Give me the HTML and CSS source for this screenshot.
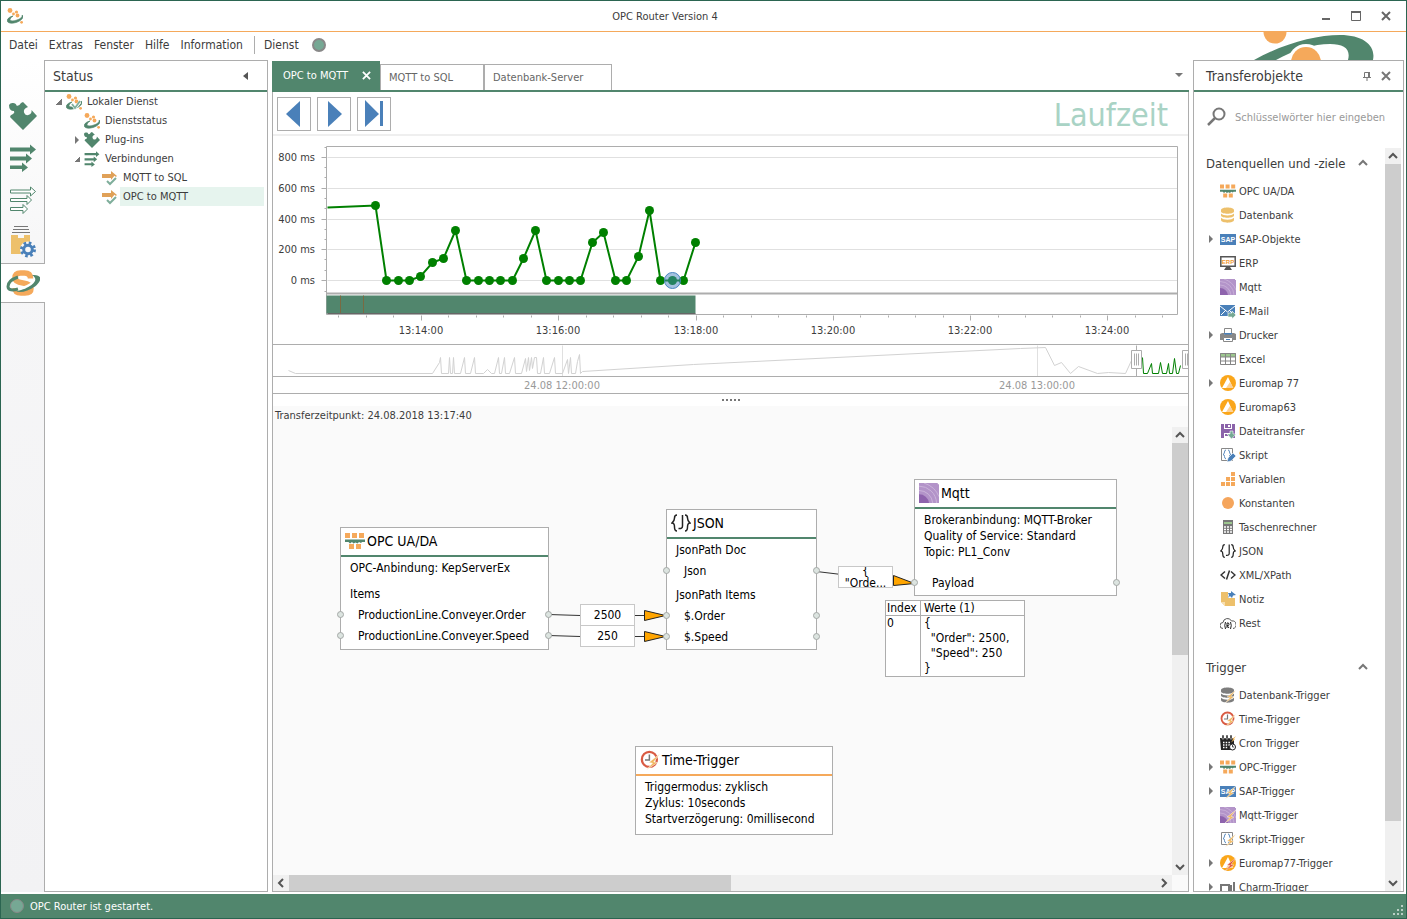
FILE: index.html
```
<!DOCTYPE html>
<html lang="de">

<head>
    <meta charset="utf-8">
    <meta name="viewport" content="width=device-width, initial-scale=1">
    <title>OPC Router Version 4</title>
    <link rel="stylesheet" href="styles.css">
</head>

<body>
    <!-- icon set -->
    <svg class="sprite" aria-hidden="true">
        <symbol id="i-logo" viewBox="0 0 16 16">
            <circle cx="3" cy="2.500" r="2.400" fill="#f5a95b" />
            <circle cx="9.500" cy="4" r="1.600" fill="#f5a95b" />
            <circle cx="6.500" cy="6" r="1.400" fill="#f5a95b" />
            <circle cx="10.500" cy="7.500" r="1.900" fill="#f5a95b" />
            <circle cx="14.600" cy="14.300" r="1.400" fill="#f5a95b" />
            <path d="M15 7c3 2-1 6-6 7.500S-1 15 .5 11.500Q1.500 9 6 8 3 9.500 3 11.500c0 2 4 1.500 7 .5s6-3 5-5z" fill="#51866d" stroke="#51866d" stroke-width=".7" />
        </symbol>
        <symbol id="i-logo-check" viewBox="0 0 16 16">
            <use href="#i-logo" />
            <path d="M6 10l3 4 5-6" fill="none" stroke="#fff" stroke-width="3" />
            <path d="M6 10l3 4 5-7" fill="none" stroke="#7fb09d" stroke-width="1.800" />
        </symbol>
        <symbol id="i-puzzle" viewBox="0 0 28 28">
            <path d="M0 3a4 4 0 0 1 4-2q3 0 3.500 2.500Q10 4.500 12 1l2-1 5 5q-5 1.500-4 5.500 1.500 4 5.500 2 2.500-1.500 2-4.500l5.500 6-14 14L1 15q0-2 3-3 2-1 1-3-5 0-5-6z" fill="#51866d" />
        </symbol>
        <symbol id="i-arrows" viewBox="0 0 26 28">
            <path d="M0 3.500h20V.5l6 5-6 5v-3H0zM0 12.500h16v-3l6 5-6 5v-3H0zM0 21.500h12v-3l6 5-6 4.500v-3H0z" fill="#51866d" />
        </symbol>
        <symbol id="i-arrows-out" viewBox="0 0 26 28">
            <path d="M.5 4h20V1l5 4.500-5 4.500V7H.5zM.5 12.500h16.500v-3l4.500 4.500-4.500 4.500v-3H.5zM.5 21.500h12.500v-3l4.500 4.500-4.500 4.500v-3H.5z" fill="#fff" stroke="#51866d" />
        </symbol>
        <symbol id="i-box" viewBox="0 0 28 32">
            <path d="M5 .5h14M4 3.500h16M3 6.500h18" stroke="#777" fill="none" />
            <path d="M2 9h7v3h6V9h6v19H2z" fill="#edc06b" />
            <circle cx="19" cy="23.500" r="8" fill="#f7f7f8" />
            <circle cx="19" cy="23.500" r="4.300" fill="none" stroke="#4a80b9" stroke-width="3" />
            <circle cx="19" cy="23.500" r="6.500" fill="none" stroke="#4a80b9" stroke-width="3" stroke-dasharray="2.550 2.550" />
        </symbol>
        <symbol id="i-service" viewBox="0 0 34 26">
            <path d="M24.500 8.500q0-5.500-6-5.500h-4q-5.500 0-5.500 5 0 4 8 5t8 5.500q0 4.500-6 4.500h-4q-6 0-6-5" fill="none" stroke="#f5a95b" stroke-width="5.500" />
            <path d="M10 19.500c7 0 17-5 20-10" fill="none" stroke="#fff" stroke-width="3" />
            <path d="M12 7Q2 10.500 2 16.500c0 4 5 4 10 2.500" fill="none" stroke="#51866d" stroke-width="3" />
            <path d="M26 5c11-1 10 6 3 11.500-6 4.500-14 6.500-19 5 8-2 11-3.500 15.500-6.500 5-4 5-7 .5-10z" fill="#51866d" />
        </symbol>
        <symbol id="i-link" viewBox="0 0 16 16">
            <path d="M0 4h9V1l6 5-6 5V8H0z" fill="#e0a158" />
            <path d="M6 10l3 3 5-6" fill="none" stroke="#fff" stroke-width="4" />
            <path d="M5 11l3 3 6-6" fill="none" stroke="#7fae9b" stroke-width="2" />
        </symbol>
        <symbol id="i-opc" viewBox="0 0 20 20">
            <path d="M0 2h5v5H0zM7 2h5v5H7zM14 2h5v5h-5zM4 13h5v5H4zM11 13h5v5h-5z" fill="#f5a95b" />
            <path d="M0 8.500h20V11h-3l-1 1-2-1-1.500 1.500-2-1-2 1L7 11l-2 1.500L3.500 11H0z" fill="#51866d" />
        </symbol>
        <symbol id="i-db" viewBox="0 0 16 16">
            <path d="M1 3c0-3.500 13-3.500 13 0v1.500c0 3-13 3-13 0zM1 6.500c2 2.500 11 2.500 13 0v2c0 3-13 3-13 0zM1 10.800c2 2.500 11 2.500 13 0v2.200c0 3.500-13 3.500-13 0z" />
        </symbol>
        <symbol id="i-sap" viewBox="0 0 16 16">
            <path d="M0 3h16v11H0z" fill="#4a80b9" />
            <text x="8" y="11" class="glyph-sap">SAP</text>
        </symbol>
        <symbol id="i-erp" viewBox="0 0 16 16">
            <path d="M.8 1.800h14.400v9.400H.8z" fill="#fff" stroke="#555" stroke-width="1.500" />
            <path d="M6 12h4l2 3H4z" fill="#555" />
            <text x="8" y="9" class="glyph-erp">ERP</text>
        </symbol>
        <symbol id="i-mqtt" viewBox="0 0 16 16">
            <path d="M0 0h16v16H0z" fill="#b394c9" />
            <path d="M0 9a8 8 0 0 1 8 7H0z" fill="#8e63ad" />
            <path d="M0 6a11 11 0 0 1 11 10M0 2.500A14 14 0 0 1 14 16M4 0q9 3 12 11" fill="none" stroke="#cbb4da" stroke-width=".8" />
            <path d="M15 0h1v1h-1z" fill="#fff" />
        </symbol>
        <symbol id="i-mail" viewBox="0 0 16 16">
            <path d="M0 2h15v11H0z" fill="#4a80b9" />
            <path d="M0 3l7.500 6L15 3M1 12l5-5M14 12L9 7" fill="none" stroke="#fff" />
            <path d="M8 10h4V8l4 4-4 4v-2H8z" fill="#76a894" stroke="#fff" stroke-width=".6" />
        </symbol>
        <symbol id="i-print" viewBox="0 0 16 16">
            <path d="M4.500 1.500h7v6h-7z" fill="#fff" stroke="#888" />
            <path d="M0 7l2-1h2v2h8V6h2l2 1v6H0z" fill="#888" />
            <path d="M4 6h8v1.500H4z" fill="#4a80b9" />
            <path d="M3.500 10.500h9v4h-9z" fill="#fff" stroke="#888" />
            <path d="M6 12.500h4" stroke="#4a80b9" />
        </symbol>
        <symbol id="i-excel" viewBox="0 0 16 16">
            <path d="M.5 2.500h15v11H.5z" fill="#fff" />
            <path d="M0 2h16v4H0z" fill="#9cc68e" />
            <path d="M.5 2.500h15v11H.5zM0 6h16M0 10h16M5.500 2v12M10.500 2v12" fill="none" stroke="#858585" />
        </symbol>
        <symbol id="i-euro" viewBox="0 0 16 16">
            <circle cx="8" cy="8" r="8" fill="#faa61a" />
            <path d="M8 2l5 11H2z" fill="#fff" />
            <path d="M10 7l3.500 6H6z" fill="#fcd39a" />
        </symbol>
        <symbol id="i-disk" viewBox="0 0 16 16">
            <path d="M1 1h14v14H1z" fill="#8b63aa" />
            <path d="M4 1h8v5H4zM4 10h8v5H4z" fill="#fff" />
            <path d="M5 1h6v4H5zM5 11h3v2H5z" fill="#8b63aa" />
            <path d="M8 2h2v2H8z" fill="#fff" />
            <path d="M10 8h3v3h3l-4.500 5L7 11h3z" fill="#76a894" stroke="#fff" stroke-width=".6" />
        </symbol>
        <symbol id="i-script" viewBox="0 0 16 16">
            <path d="M1.500 1.500h11v12h-11z" fill="#fff" stroke="#888" />
            <path d="M6 3Q4.500 3 4.500 5T3 7.500q1.500 0 1.500 2T6 12M8 3q1.500 0 1.500 2T11 7.500q-1.500 0-1.500 2T8 12" fill="none" stroke="#4a80b9" stroke-width=".9" />
        </symbol>
        <symbol id="i-pen" viewBox="0 0 16 16">
            <path d="M7 15l1-4 5-5 3 3-5 5z" fill="#4a80b9" stroke="#fff" stroke-width=".6" />
        </symbol>
        <symbol id="i-vars" viewBox="0 0 16 16">
            <path d="M1 11h4v4H1zM6 11h4v4H6zM11 11h4v4h-4zM6 6h4v4H6zM11 6h4v4h-4zM11 1h4v4h-4z" fill="#f5a95b" />
        </symbol>
        <symbol id="i-const" viewBox="0 0 16 16">
            <circle cx="8" cy="8" r="6" fill="#f5a55c" />
        </symbol>
        <symbol id="i-calc" viewBox="0 0 16 16">
            <path d="M3 1h10v14H3z" fill="#777" />
            <path d="M4 3h8v2H4z" fill="#9cc68e" />
            <path d="M4 8h8M4 10.500h8M4 13h8" stroke="#fff" stroke-width="1.500" stroke-dasharray="2 1" />
        </symbol>
        <symbol id="i-json" viewBox="0 0 20 20">
            <path d="M6 2Q3.500 2 3.500 5T1 10q2.500 0 2.500 4T6 18M14 2q2.500 0 2.500 3T19 10q-2.500 0-2.500 4T14 18M11.500 2v11q0 3-4 2.500" fill="none" stroke="#222" stroke-width="1.500" />
        </symbol>
        <symbol id="i-xml" viewBox="0 0 16 16">
            <path d="M5 4.500L1 8l4 3.500M11 4.500L15 8l-4 3.500M9.500 3.500l-3 9" fill="none" stroke="#333" stroke-width="1.500" />
        </symbol>
        <symbol id="i-note" viewBox="0 0 16 16">
            <path d="M1 1h14v14H5l-4-4z" fill="#edc06b" />
            <path d="M1 11h4v4z" fill="#f7dfb0" />
            <path d="M8 0h8v7H8z" fill="#fff" />
            <path d="M11 0l5 4-3 .5-1 2.500-2-2-2 2 1-3-1-2h3z" fill="#4a80b9" />
        </symbol>
        <symbol id="i-rest" viewBox="0 0 16 16">
            <path d="M3 13.500a3 3 0 0 1 0-6 4.500 4.500 0 0 1 8.500-1.500 3.500 3.500 0 0 1 1.500 7.500" fill="none" stroke="#555" />
            <path d="M5.500 7q-1.500 3.500 0 7M10.500 7q1.500 3.500 0 7M7 13V8h1.500q1 1.500 0 2.500H7l2 2.500" fill="none" stroke="#222" />
        </symbol>
        <symbol id="i-clock" viewBox="0 0 16 16">
            <circle cx="7.500" cy="7.500" r="6" fill="#fff" stroke="#d95b43" stroke-width="1.800" />
            <path d="M7.500 3.500V8H4" fill="none" stroke="#777" stroke-width="1.200" />
        </symbol>
        <symbol id="i-cron" viewBox="0 0 16 16">
            <path d="M0 3h14v12H1z" fill="#222" />
            <path d="M2 0h2v4H2zM6 0h2v4H6zM10 0h2v4h-2z" fill="#222" stroke="#fff" stroke-width=".5" />
            <path d="M3 7.500h8M3 10h8M3 12.500h5" stroke="#fff" stroke-width="1.300" stroke-dasharray="1.500 1.200" />
            <path d="M16 1l-4 3 1 .5-2 3 4-3-1-.5z" fill="#f0b860" />
            <circle cx="12.500" cy="12" r="3" fill="#fff" stroke="#222" />
            <path d="M12.500 10v2h1.500" fill="none" stroke="#222" stroke-width=".8" />
        </symbol>
        <symbol id="i-charm" viewBox="0 0 16 16">
            <path d="M1 14V6h8v8M11 14V6M14 14V3" fill="none" stroke="#777" stroke-width="2" />
        </symbol>
        <symbol id="i-bolt" viewBox="0 0 16 16">
            <path d="M16 3l-9 7 3 .5L5 16l9-6-3-.5z" stroke="#fff" stroke-width=".4" />
        </symbol>
        <symbol id="i-search" viewBox="0 0 20 20">
            <circle cx="12" cy="7" r="5.500" fill="none" stroke="#777" stroke-width="2" />
            <path d="M8 11l-7 7" stroke="#777" stroke-width="2.500" />
        </symbol>
        <symbol id="i-close" viewBox="0 0 10 10">
            <path d="M1 1l8 8M9 1L1 9" fill="none" stroke="currentColor" stroke-width="2" />
        </symbol>
        <symbol id="i-up" viewBox="0 0 10 10">
            <path d="M1 7l4-4 4 4" fill="none" stroke="currentColor" stroke-width="2" />
        </symbol>
    </svg>

    <div class="titlebar">
        <svg class="app-logo"><use href="#i-logo" /></svg>
        <h1>OPC Router Version 4</h1>
        <div class="window-buttons">
            <button aria-label="Minimieren"><svg viewBox="0 0 10 10"><path d="M1 8h8" stroke="currentColor" stroke-width="2" /></svg></button>
            <button aria-label="Maximieren"><svg viewBox="0 0 10 10"><path d="M.5.500h9v9h-9z" fill="none" stroke="currentColor" /><path d="M0 1h10" stroke="currentColor" stroke-width="2" /></svg></button>
            <button aria-label="Schließen"><svg><use href="#i-close" /></svg></button>
        </div>
    </div>

    <div class="menubar">
        <button>Datei</button>
        <button>Extras</button>
        <button>Fenster</button>
        <button>Hilfe</button>
        <button>Information</button>
        <button class="service-menu">Dienst</button>
        <span class="service-light"></span>
        <svg class="brand" viewBox="0 0 120 28">
            <path d="M0 28C28 12 62 3 86 3c24 0 36 11 33 25H94c3-11-4-16-18-16-16 0-36 6-54 16z" fill="#51866d" />
            <circle cx="21" cy="0" r="11.500" fill="#f5a95b" />
            <circle cx="52" cy="30" r="18" fill="#fff" />
            <circle cx="52" cy="30" r="15" fill="#f5a95b" />
        </svg>
    </div>

    <div class="main">
        <div class="sidenav">
            <button aria-label="Plug-ins"><svg width="28" height="28"><use href="#i-puzzle" /></svg></button>
            <button aria-label="Verbindungen"><svg width="26" height="28"><use href="#i-arrows" /></svg></button>
            <button aria-label="Vorlagen"><svg width="26" height="28"><use href="#i-arrows-out" /></svg></button>
            <button aria-label="Projekte"><svg width="28" height="32"><use href="#i-box" /></svg></button>
            <button aria-label="Status" class="selected"><svg width="34" height="26"><use href="#i-service" /></svg></button>
        </div>

        <div class="panel status">
            <div class="panel-head">
                <h2>Status</h2>
                <button aria-label="Einklappen"><svg viewBox="0 0 10 10"><path d="M7 1v8L2 5z" fill="#555" /></svg></button>
            </div>
            <ul class="tree">
                <li class="level1"><span class="twist open"></span><svg class="icon"><use href="#i-logo-check" /></svg><span>Lokaler Dienst</span></li>
                <li class="level2"><span class="twist"></span><svg class="icon"><use href="#i-logo" /></svg><span>Dienststatus</span></li>
                <li class="level2"><span class="twist closed"></span><svg class="icon"><use href="#i-puzzle" /></svg><span>Plug-ins</span></li>
                <li class="level2"><span class="twist open"></span><svg class="icon"><use href="#i-arrows" /></svg><span>Verbindungen</span></li>
                <li class="level3"><span class="twist"></span><svg class="icon"><use href="#i-link" /></svg><span>MQTT to SQL</span></li>
                <li class="level3 active"><span class="twist"></span><svg class="icon"><use href="#i-link" /></svg><span>OPC to MQTT</span></li>
            </ul>
        </div>

        <div class="center">
            <div class="tabs">
                <button class="tab current">OPC to MQTT <svg><use href="#i-close" /></svg></button>
                <button class="tab">MQTT to SQL</button>
                <button class="tab wide">Datenbank-Server</button>
                <button class="tab-list" aria-label="Alle Tabs"><svg viewBox="0 0 8 8"><path d="M0 2h8L4 6z" fill="#777" /></svg></button>
            </div>
            <div class="center-body">
                <div class="toolbar">
                    <button aria-label="Zurück"><svg viewBox="0 0 32 32"><path d="M22 3v26L8 16z" fill="#4a80b9" /></svg></button>
                    <button aria-label="Vor"><svg viewBox="0 0 32 32"><path d="M10 3v26l14-13z" fill="#4a80b9" /></svg></button>
                    <button aria-label="Ende"><svg viewBox="0 0 32 32"><path d="M7 2v27l14-13zM22 3h3v25h-3z" fill="#4a80b9" /></svg></button>
                    <span class="caption">Laufzeit</span>
                </div>

                <!-- runtime chart -->
                <svg class="chart">
                    <defs>
                        <marker id="dot" markerWidth="10" markerHeight="10" refX="5" refY="5" markerUnits="userSpaceOnUse">
                            <circle cx="5" cy="5" r="4.500" fill="#008000" />
                        </marker>
                    </defs>
                    <g transform="translate(.5 .5)">
                        <path d="M54 21h850M54 52h850M54 83h850M54 113h850M54 144h850" stroke="#e0e0e0" />
                        <path d="M53 178V10h851v168zM48 21h5M48 52h5M48 83h5M48 113h5M48 144h5M51 11h2M51 31h2M51 41h2M51 62h2M51 72h2M51 93h2M51 103h2M51 123h2M51 134h2M51 155h2" class="axis" />
                        <path d="M148 179v5M285 179v5M423 179v5M560 179v5M697 179v5M834 179v5M65 179v2M93 179v2M120 179v2M175 179v2M203 179v2M230 179v2M258 179v2M313 179v2M340 179v2M368 179v2M395 179v2M450 179v2M478 179v2M505 179v2M533 179v2M587 179v2M615 179v2M642 179v2M670 179v2M725 179v2M752 179v2M779 179v2M807 179v2M862 179v2M889 179v2" class="axis" />
                        <path d="M53 157h851" stroke="#adadad" stroke-width="2" />
                        <path d="M53 159h369v18H53z" fill="#51866d" />
                        <path d="M67 159v18M90 159v18" stroke="#7a6a42" />
                        <path d="M54 177h368" stroke="#666" />
                        <polyline class="series" points="54,71 102,69 113,144 125,144 136,144 147,140 159,126 170,122 182,94 193,144 205,144 216,144 227,144 239,144 250,122 262,94 273,144 285,144 296,144 307,144 319,106 330,96 342,144 353,144 365,120 376,74 387,144 399,144 410,144 422,106" />
                        <circle cx="399" cy="144" r="8" fill="#4a86c0" fill-opacity=".5" stroke="#4a86c0" />
                    </g>
                    <g class="labels-y">
                        <text x="42" y="25">800 ms</text>
                        <text x="42" y="56">600 ms</text>
                        <text x="42" y="87">400 ms</text>
                        <text x="42" y="117">200 ms</text>
                        <text x="42" y="148">0 ms</text>
                    </g>
                    <g class="labels-x">
                        <text x="148" y="198">13:14:00</text>
                        <text x="285" y="198">13:16:00</text>
                        <text x="423" y="198">13:18:00</text>
                        <text x="560" y="198">13:20:00</text>
                        <text x="697" y="198">13:22:00</text>
                        <text x="834" y="198">13:24:00</text>
                    </g>
                </svg>

                <!-- range selector -->
                <svg class="range">
                    <g transform="translate(.5 .5)" fill="none">
                        <path d="M289 0v31M764 0v31" stroke="#e0e0e0" />
                        <polyline stroke="#d2d2d2" points="15,25 22,28 159,28 166,17 167,12 168,28 175,28 176,12 177,28 179,28 180,12 181,28 187,28 191,12 192,28 197,28 201,12 202,28 210,28 214,24 218,28 221,28 225,12 226,28 228,28 231,12 232,28 236,28 241,12 242,28 248,28 252,13 253,26 255,12 256,25 258,12 259,23 261,12 263,12 264,28 267,28 270,12 271,28 276,28 281,12 282,28 289,28 294,14 295,28 297,12 298,28 302,28 304,16 306,9 307,28 309,26 420,19 747,3 772,2 781,20 788,17 797,28 805,21 824,28 835,27 852,28 858,15" />
                        <path d="M863 0v31" stroke="#adadad" />
                        <polyline stroke="#008000" points="869,12 870,28 874,28 878,18 879,28 885,28 887,17 889,28 893,28 895,18 896,28 899,28 901,13 903,28 905,28 907,20" />
                        <path d="M858 5h10v18h-10zM909 5h10v18h-10z" fill="#fff" stroke="#adadad" />
                        <path d="M861 8v12M863 8v12M865 8v12M912 8v12M914 8v12" stroke="#adadad" />
                    </g>
                </svg>
                <svg class="range-labels">
                    <text x="289" y="12">24.08 12:00:00</text>
                    <text x="764" y="12">24.08 13:00:00</text>
                </svg>
                <div class="splitter"><i></i><i></i><i></i><i></i><i></i></div>

                <div class="flow">
                    <p class="transfer-time">Transferzeitpunkt: 24.08.2018 13:17:40</p>
                    <div class="flow-view">
                        <div class="canvas">
                            <div class="node node-opc">
                                <h3><svg class="icon20"><use href="#i-opc" /></svg>OPC UA/DA</h3>
                                <p>OPC-Anbindung: KepServerEx</p>
                                <p class="section">Items</p>
                                <ul>
                                    <li>ProductionLine.Conveyer.Order</li>
                                    <li>ProductionLine.Conveyer.Speed</li>
                                </ul>
                            </div>
                            <div class="node node-json">
                                <h3><svg class="icon20"><use href="#i-json" /></svg>JSON</h3>
                                <p>JsonPath Doc</p>
                                <ul>
                                    <li>Json</li>
                                </ul>
                                <p class="subsection">JsonPath Items</p>
                                <ul>
                                    <li>$.Order</li>
                                    <li>$.Speed</li>
                                </ul>
                            </div>
                            <div class="node node-mqtt">
                                <h3><svg class="icon20"><use href="#i-mqtt" /></svg>Mqtt</h3>
                                <p>Brokeranbindung: MQTT-Broker</p>
                                <p>Quality of Service: Standard</p>
                                <p>Topic: PL1_Conv</p>
                                <ul class="payload">
                                    <li>Payload</li>
                                </ul>
                            </div>
                            <div class="node node-time">
                                <h3><svg class="icon20"><use href="#i-clock" /><use href="#i-bolt" class="bolt" /></svg>Time-Trigger</h3>
                                <p>Triggermodus: zyklisch</p>
                                <p>Zyklus: 10seconds</p>
                                <p>Startverzögerung: 0millisecond</p>
                            </div>
                            <svg class="wires">
                                <g transform="translate(.5 .5)">
                                    <path d="M275 187l32 1h87M275 208l32 1h87M543 144l25 3" stroke="#333" fill="none" />
                                    <path d="M371 183v10l21-5zM371 204v10l21-5zM620 148v10l21-2z" fill="#ffa500" stroke="#222" />
                                    <g fill="#dce4e0" stroke="#a5a9a7">
                                        <circle cx="67" cy="187" r="3" /><circle cx="67" cy="208" r="3" />
                                        <circle cx="275" cy="187" r="3" /><circle cx="275" cy="208" r="3" />
                                        <circle cx="393" cy="143" r="3" /><circle cx="393" cy="188" r="3" /><circle cx="393" cy="209" r="3" />
                                        <circle cx="543" cy="143" r="3" /><circle cx="543" cy="188" r="3" /><circle cx="543" cy="209" r="3" />
                                        <circle cx="641" cy="155" r="3" /><circle cx="843" cy="155" r="3" />
                                    </g>
                                </g>
                            </svg>
                            <span class="value value-order">2500</span>
                            <span class="value value-speed">250</span>
                            <span class="value value-json">{
"Orde...</span>
                            <table class="values">
                                <tr>
                                    <th>Index</th>
                                    <th>Werte (1)</th>
                                </tr>
                                <tr>
                                    <td>0</td>
                                    <td>{
  "Order": 2500,
  "Speed": 250
}</td>
                                </tr>
                            </table>
                        </div>
                        <div class="scroll-v">
                            <button aria-label="Nach oben"><svg><use href="#i-up" /></svg></button>
                            <div class="thumb"></div>
                            <button aria-label="Nach unten" class="down"><svg><use href="#i-up" /></svg></button>
                        </div>
                    </div>
                    <div class="scroll-h">
                        <button aria-label="Nach links" class="left"><svg><use href="#i-up" /></svg></button>
                        <div class="thumb"></div>
                        <button aria-label="Nach rechts" class="right"><svg><use href="#i-up" /></svg></button>
                    </div>
                </div>
            </div>
        </div>

        <div class="panel objects">
            <div class="panel-head">
                <h2>Transferobjekte</h2>
                <button aria-label="Anheften"><svg viewBox="0 0 10 10"><path d="M2.500 6V1.500h5V6M1 6.500h8M5 6v4" fill="none" stroke="#777" /><path d="M6 1h2v5H6z" fill="#777" /></svg></button>
                <button aria-label="Schließen"><svg><use href="#i-close" /></svg></button>
            </div>
            <label class="search">
                <svg><use href="#i-search" /></svg>
                <input type="text" placeholder="Schlüsselwörter hier eingeben" aria-label="Schlüsselwörter">
            </label>
            <div class="object-area">
                <div class="object-list">
                    <h3>Datenquellen und -ziele <svg><use href="#i-up" /></svg></h3>
                    <ul>
                        <li><span class="twist"></span><svg class="icon"><use href="#i-opc" /></svg>OPC UA/DA</li>
                        <li><span class="twist"></span><svg class="icon yellow"><use href="#i-db" /></svg>Datenbank</li>
                        <li><span class="twist closed"></span><svg class="icon"><use href="#i-sap" /></svg>SAP-Objekte</li>
                        <li><span class="twist"></span><svg class="icon"><use href="#i-erp" /></svg>ERP</li>
                        <li><span class="twist"></span><svg class="icon"><use href="#i-mqtt" /></svg>Mqtt</li>
                        <li><span class="twist"></span><svg class="icon"><use href="#i-mail" /></svg>E-Mail</li>
                        <li><span class="twist closed"></span><svg class="icon"><use href="#i-print" /></svg>Drucker</li>
                        <li><span class="twist"></span><svg class="icon"><use href="#i-excel" /></svg>Excel</li>
                        <li><span class="twist closed"></span><svg class="icon"><use href="#i-euro" /></svg>Euromap 77</li>
                        <li><span class="twist"></span><svg class="icon"><use href="#i-euro" /></svg>Euromap63</li>
                        <li><span class="twist"></span><svg class="icon"><use href="#i-disk" /></svg>Dateitransfer</li>
                        <li><span class="twist"></span><svg class="icon"><use href="#i-script" /><use href="#i-pen" /></svg>Skript</li>
                        <li><span class="twist"></span><svg class="icon"><use href="#i-vars" /></svg>Variablen</li>
                        <li><span class="twist"></span><svg class="icon"><use href="#i-const" /></svg>Konstanten</li>
                        <li><span class="twist"></span><svg class="icon"><use href="#i-calc" /></svg>Taschenrechner</li>
                        <li><span class="twist"></span><svg class="icon"><use href="#i-json" /></svg>JSON</li>
                        <li><span class="twist"></span><svg class="icon"><use href="#i-xml" /></svg>XML/XPath</li>
                        <li><span class="twist"></span><svg class="icon"><use href="#i-note" /></svg>Notiz</li>
                        <li><span class="twist"></span><svg class="icon"><use href="#i-rest" /></svg>Rest</li>
                    </ul>
                    <h3>Trigger <svg><use href="#i-up" /></svg></h3>
                    <ul>
                        <li><span class="twist"></span><svg class="icon"><use href="#i-db" class="grey" /><use href="#i-bolt" class="bolt" /></svg>Datenbank-Trigger</li>
                        <li><span class="twist"></span><svg class="icon"><use href="#i-clock" /><use href="#i-bolt" class="bolt" /></svg>Time-Trigger</li>
                        <li><span class="twist"></span><svg class="icon"><use href="#i-cron" /></svg>Cron Trigger</li>
                        <li><span class="twist closed"></span><svg class="icon"><use href="#i-opc" /></svg>OPC-Trigger</li>
                        <li><span class="twist closed"></span><svg class="icon"><use href="#i-sap" /><use href="#i-bolt" class="bolt" /></svg>SAP-Trigger</li>
                        <li><span class="twist"></span><svg class="icon"><use href="#i-mqtt" /><use href="#i-bolt" class="bolt" /></svg>Mqtt-Trigger</li>
                        <li><span class="twist"></span><svg class="icon"><use href="#i-script" /><use href="#i-bolt" class="bolt" /></svg>Skript-Trigger</li>
                        <li><span class="twist closed"></span><svg class="icon"><use href="#i-euro" /><use href="#i-bolt" class="bolt red" /></svg>Euromap77-Trigger</li>
                        <li><span class="twist closed"></span><svg class="icon"><use href="#i-charm" /></svg>Charm-Trigger</li>
                    </ul>
                </div>
                <div class="scroll-v">
                    <button aria-label="Nach oben"><svg><use href="#i-up" /></svg></button>
                    <div class="thumb"></div>
                    <button aria-label="Nach unten" class="down"><svg><use href="#i-up" /></svg></button>
                </div>
            </div>
        </div>
    </div>

    <div class="statusbar">
        <span class="service-light"></span>
        OPC Router ist gestartet.
        <svg class="grip" viewBox="0 0 10 10"><path d="M8 0h2v2H8zM8 4h2v2H8zM4 4h2v2H4zM8 8h2v2H8zM4 8h2v2H4zM0 8h2v2H0z" fill="#b9cfc4" /></svg>
    </div>
</body>

</html>
```
FILE: styles.css
```
* {
    box-sizing: border-box;
}

body {
    display: flex;
    flex-direction: column;
    height: 100vh;
    margin: 0;
    border: 1px solid #2b6551;
    overflow: hidden;
    background: #fff;
    color: #3c3c3c;
    font-family: "DejaVu Sans Condensed", "Noto Sans", sans-serif;
    font-size: 11px;
}

h1, h2, h3, p, ul {
    margin: 0;
    padding: 0;
    font-weight: normal;
}

ul {
    list-style: none;
}

button {
    display: flex;
    align-items: center;
    justify-content: center;
    padding: 0;
    border: 0;
    background: none;
    color: inherit;
    font: inherit;
}

svg {
    flex: none;
}

.sprite {
    display: none;
}

.icon {
    width: 16px;
    height: 16px;
}

.icon20 {
    width: 20px;
    height: 20px;
}

.yellow {
    fill: #edc06b;
}

.grey {
    fill: #7d7d7d;
}

.bolt {
    fill: #f0b860;
}

.red {
    fill: #e0533a;
}

.glyph-sap, .glyph-erp {
    font: bold 7px "Liberation Sans", sans-serif;
    text-anchor: middle;
    fill: #fff;
}

.glyph-erp {
    font-size: 6px;
    fill: #ee9a35;
}

/* Title and menu */
.titlebar {
    display: flex;
    align-items: center;
    height: 31px;
    padding: 0 15px 0 6px;
    border-bottom: 1px solid #f5a95b;
}

.titlebar h1 {
    flex: 1;
    padding-right: 14px;
    text-align: center;
    font-size: 11px;
}

.app-logo {
    width: 16px;
    height: 16px;
}

.window-buttons {
    display: flex;
    gap: 20px;
    color: #666;
}

.window-buttons svg {
    width: 10px;
    height: 10px;
}

.menubar {
    display: flex;
    align-items: center;
    height: 28px;
    padding: 0 32px 2px 8px;
    gap: 11px;
    font-size: 12px;
}

.service-menu {
    height: 18px;
    padding-left: 9px;
    border-left: 1px solid #adadad;
}

.service-light {
    width: 14px;
    height: 14px;
    border: 1px solid #888;
    border-radius: 50%;
    background: #76a894;
}

.menubar .service-light {
    margin-left: 2px;
    border-width: 2px;
}

.brand {
    align-self: flex-start;
    width: 120px;
    height: 28px;
    margin-left: auto;
}

/* Side navigation */
.main {
    display: flex;
    flex: 1;
    min-height: 0;
    padding: 0 2px 2px 0;
}

.sidenav {
    display: flex;
    flex-direction: column;
    width: 43px;
    padding-top: 35px;
    background: linear-gradient(#fff, #f6f6f7 200px, #f2f2f4);
}

.sidenav button {
    height: 42px;
}

.sidenav .selected {
    z-index: 1;
    height: 40px;
    margin-right: -1px;
    border: solid #adadad;
    border-width: 1px 0;
    background: #fff;
}

/* Panels */
.panel {
    display: flex;
    flex-direction: column;
    border: 1px solid #adadad;
    background: #fff;
}

.panel-head {
    display: flex;
    align-items: center;
    height: 31px;
    padding: 0 12px;
    gap: 9px;
    border-bottom: 2px solid #51866d;
}

.panel-head h2 {
    flex: 1;
    font-size: 14px;
}

.panel-head svg {
    width: 10px;
    height: 10px;
    color: #777;
}

.status {
    width: 224px;
    margin-right: 4px;
}

.status .panel-head {
    padding: 0 16px 0 8px;
}

.tree li {
    display: flex;
    align-items: center;
    height: 19px;
    padding-right: 3px;
}

.tree .icon {
    margin-right: 2px;
}

.tree li span:last-child {
    flex: 1;
    padding-left: 3px;
    line-height: 19px;
}

.tree .level1 {
    padding-left: 9px;
}

.tree .level2 {
    padding-left: 27px;
}

.tree .level3 {
    padding-left: 45px;
}

.tree .active span:last-child {
    background: #e6f4ee;
}

.twist {
    display: flex;
    align-items: center;
    justify-content: center;
    width: 12px;
    height: 16px;
}

.tree .twist {
    width: 10px;
    margin-right: 2px;
}

.closed::before {
    content: "";
    border: 4px solid transparent;
    border-right-width: 0;
    border-left-color: #777;
}

.open::before {
    content: "";
    width: 6px;
    height: 6px;
    background: linear-gradient(135deg, transparent 50%, #777 50%);
}

/* Document tabs */
.center {
    display: flex;
    flex: 1;
    flex-direction: column;
    min-width: 0;
    margin-right: 4px;
}

.tabs {
    display: flex;
    align-items: flex-end;
    height: 32px;
    border-bottom: 2px solid #51866d;
}

.tab {
    justify-content: flex-start;
    width: 104px;
    height: 26px;
    padding: 0 8px;
    border: 1px solid #adadad;
    border-bottom: 0;
    color: #666;
}

.tab svg {
    width: 9px;
    height: 9px;
    margin-left: auto;
}

.current {
    width: 108px;
    height: 29px;
    padding: 0 9px 0 11px;
    border: 0;
    background: #51866d;
    color: #fff;
}

.wide {
    width: 128px;
}

.tab-list {
    width: 8px;
    height: 30px;
    margin: 0 6px 0 auto;
}

.center-body {
    display: flex;
    flex: 1;
    flex-direction: column;
    min-height: 0;
    border: 1px solid #adadad;
    border-top: 0;
}

.toolbar {
    display: flex;
    align-items: center;
    height: 44px;
    padding: 2px 20px 0 4px;
    gap: 6px;
    border-bottom: 2px solid #efefef;
}

.toolbar button {
    width: 34px;
    height: 34px;
    border: 1px solid #adadad;
}

.caption {
    margin-left: auto;
    padding-top: 2px;
    color: #a9d3c5;
    font-size: 32px;
    line-height: 36px;
}

/* Charts */
.chart {
    width: 100%;
    height: 208px;
}

.chart text {
    fill: #3c3c3c;
}

.axis {
    fill: none;
    stroke: #adadad;
}

.series {
    fill: none;
    stroke: #008000;
    stroke-width: 2;
    marker-mid: url(#dot);
    marker-end: url(#dot);
}

.labels-y {
    text-anchor: end;
}

.labels-x {
    text-anchor: middle;
}

.range {
    width: 100%;
    height: 33px;
    border: solid #adadad;
    border-width: 1px 0;
}

.range-labels {
    width: 100%;
    height: 17px;
    border-bottom: 1px solid #adadad;
    fill: #999;
    text-anchor: middle;
}

.splitter {
    display: flex;
    align-items: center;
    justify-content: center;
    height: 12px;
    gap: 2px;
}

.splitter i {
    width: 2px;
    height: 2px;
    background: #777;
}

/* Transfer diagram */
.flow {
    display: flex;
    flex: 1;
    flex-direction: column;
    min-height: 0;
    background: #fafafa;
}

.transfer-time {
    height: 21px;
    padding-left: 2px;
    line-height: 20px;
}

.flow-view {
    display: flex;
    flex: 1;
    min-height: 0;
}

.canvas {
    position: relative;
    flex: 1;
    overflow: hidden;
    color: #000;
    font-size: 12px;
}

.wires {
    position: absolute;
    top: 0;
    left: 0;
    width: 100%;
    height: 100%;
}

.node {
    position: absolute;
    border: 1px solid #adadad;
    background: #fff;
    line-height: 16px;
}

.node h3 {
    display: flex;
    align-items: center;
    height: 29px;
    margin-bottom: 3px;
    padding: 0 0 2px 4px;
    gap: 2px;
    border-bottom: 2px solid #51866d;
    font-size: 14px;
}

.node p {
    padding-left: 9px;
    white-space: nowrap;
}

.node .section {
    margin-top: 10px;
}

.node .subsection {
    margin-top: 5px;
}

.node ul {
    margin-top: 3px;
    padding-left: 17px;
    line-height: 21px;
}

.node .payload {
    margin-top: 13px;
}

.node-opc {
    top: 100px;
    left: 67px;
    width: 209px;
    height: 123px;
}

.node-json {
    top: 82px;
    left: 393px;
    width: 151px;
    height: 141px;
}

.node-mqtt {
    top: 52px;
    left: 641px;
    width: 203px;
    height: 117px;
}

.node-time {
    top: 319px;
    left: 362px;
    width: 198px;
    height: 89px;
}

.node-time h3 {
    border-color: #f5a95b;
}

.value {
    position: absolute;
    left: 307px;
    display: flex;
    align-items: center;
    justify-content: center;
    width: 55px;
    height: 22px;
    overflow: hidden;
    border: 1px solid #c8c8c8;
    background: #fff;
    line-height: 12px;
    text-align: center;
    white-space: pre;
}

.value-order {
    top: 177px;
}

.value-speed {
    top: 198px;
}

.value-json {
    top: 139px;
    left: 565px;
}

.values {
    position: absolute;
    top: 173px;
    left: 612px;
    width: 140px;
    border-collapse: collapse;
    background: #fff;
    line-height: 15px;
}

.values th, .values td {
    padding: 0 1px;
    border: 1px solid #adadad;
    font-weight: normal;
    text-align: left;
    vertical-align: top;
    white-space: pre;
}

.values th {
    line-height: 14px;
}

.values th + th, .values td + td {
    width: 104px;
    padding-left: 3px;
}

/* Scrollbars */
.scroll-v, .scroll-h {
    display: flex;
    background: #f0f0f0;
    color: #555;
}

.scroll-v {
    flex-direction: column;
    width: 16px;
}

.scroll-v button, .scroll-h button {
    width: 16px;
    height: 16px;
}

.scroll-v svg, .scroll-h svg {
    width: 10px;
    height: 10px;
}

.thumb {
    background: #cdcdcd;
}

.flow .scroll-v .thumb {
    height: 212px;
}

.scroll-h {
    height: 16px;
    margin-right: 16px;
}

.scroll-h .thumb {
    width: 442px;
}

.down {
    margin-top: auto;
    transform: rotate(180deg);
}

.left {
    transform: rotate(-90deg);
}

.right {
    margin-left: auto;
    transform: rotate(90deg);
}

/* Transfer objects */
.objects {
    width: 211px;
    padding-right: 2px;
}

.objects .panel-head {
    margin-right: -2px;
}

.search {
    display: flex;
    align-items: center;
    height: 50px;
    margin-bottom: 6px;
    padding-left: 13px;
    gap: 8px;
}

.search svg {
    width: 20px;
    height: 20px;
}

.search input {
    flex: 1;
    min-width: 0;
    padding: 0;
    border: 0;
    outline: 0;
    font: inherit;
}

.search input::placeholder {
    color: #999;
}

.object-area {
    display: flex;
    flex: 1;
    min-height: 0;
}

.object-list {
    flex: 1;
    overflow: hidden;
}

.object-list h3 {
    display: flex;
    align-items: center;
    justify-content: space-between;
    height: 31px;
    padding: 0 17px 1px 12px;
    font-size: 13px;
}

.object-list h3 svg {
    width: 10px;
    height: 10px;
    color: #777;
}

.object-list ul + h3 {
    margin-top: 17px;
}

.object-list li {
    display: flex;
    align-items: center;
    height: 24px;
    padding-left: 11px;
}

.object-list .icon {
    margin: 0 3px;
}

.object-area .thumb {
    height: 657px;
}

/* Status bar */
.statusbar {
    display: flex;
    align-items: center;
    height: 24px;
    padding: 0 3px 0 9px;
    gap: 6px;
    background: #51866d;
    color: #fff;
}

.grip {
    width: 10px;
    height: 10px;
    margin: 8px 0 0 auto;
}
```
